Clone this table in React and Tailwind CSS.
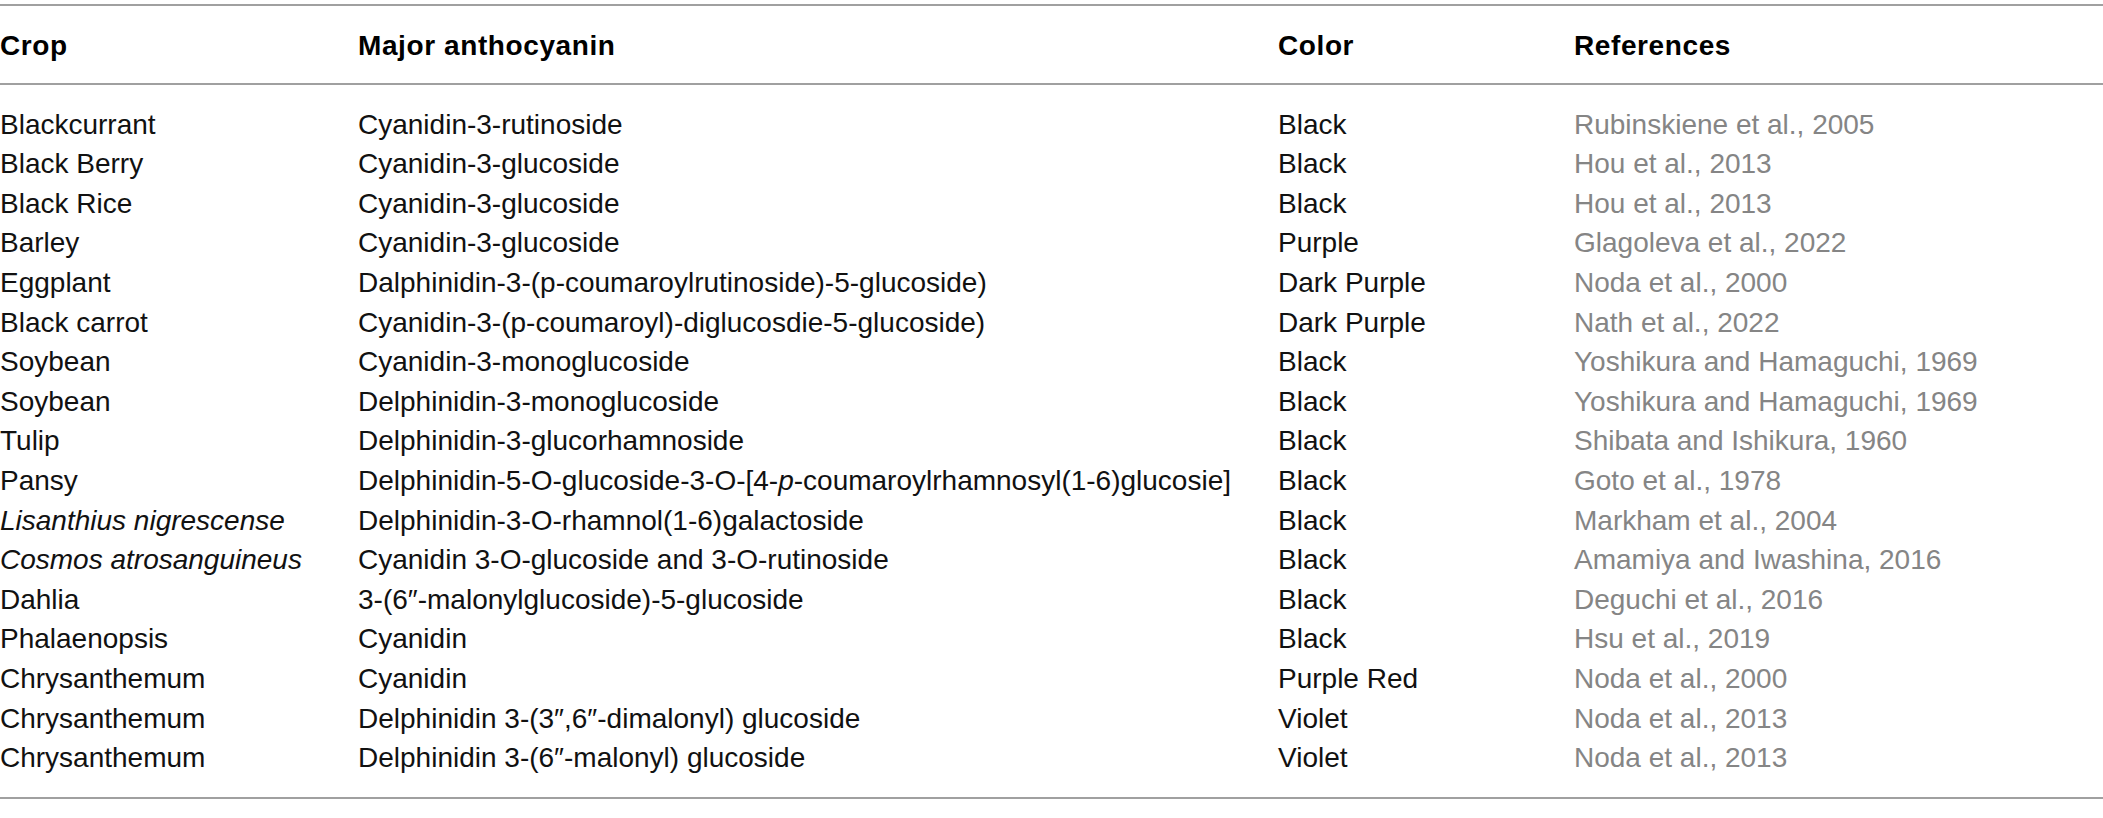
const rows = [
  { crop: "Blackcurrant", major: "Cyanidin-3-rutinoside", color: "Black", ref: "Rubinskiene et al., 2005" },
  { crop: "Black Berry", major: "Cyanidin-3-glucoside", color: "Black", ref: "Hou et al., 2013" },
  { crop: "Black Rice", major: "Cyanidin-3-glucoside", color: "Black", ref: "Hou et al., 2013" },
  { crop: "Barley", major: "Cyanidin-3-glucoside", color: "Purple", ref: "Glagoleva et al., 2022" },
  { crop: "Eggplant", major: "Dalphinidin-3-(p-coumaroylrutinoside)-5-glucoside)", color: "Dark Purple", ref: "Noda et al., 2000" },
  { crop: "Black carrot", major: "Cyanidin-3-(p-coumaroyl)-diglucosdie-5-glucoside)", color: "Dark Purple", ref: "Nath et al., 2022" },
  { crop: "Soybean", major: "Cyanidin-3-monoglucoside", color: "Black", ref: "Yoshikura and Hamaguchi, 1969" },
  { crop: "Soybean", major: "Delphinidin-3-monoglucoside", color: "Black", ref: "Yoshikura and Hamaguchi, 1969" },
  { crop: "Tulip", major: "Delphinidin-3-glucorhamnoside", color: "Black", ref: "Shibata and Ishikura, 1960" },
  {
    crop: "Pansy",
    major: (
      <>
        Delphinidin-5-O-glucoside-3-O-[4-<i>p</i>-coumaroylrhamnosyl(1-6)glucosie]
      </>
    ),
    color: "Black",
    ref: "Goto et al., 1978",
  },
  { crop: <i>Lisanthius nigrescense</i>, major: "Delphinidin-3-O-rhamnol(1-6)galactoside", color: "Black", ref: "Markham et al., 2004" },
  { crop: <i>Cosmos atrosanguineus</i>, major: "Cyanidin 3-O-glucoside and 3-O-rutinoside", color: "Black", ref: "Amamiya and Iwashina, 2016" },
  { crop: "Dahlia", major: "3-(6″-malonylglucoside)-5-glucoside", color: "Black", ref: "Deguchi et al., 2016" },
  { crop: "Phalaenopsis", major: "Cyanidin", color: "Black", ref: "Hsu et al., 2019" },
  { crop: "Chrysanthemum", major: "Cyanidin", color: "Purple Red", ref: "Noda et al., 2000" },
  { crop: "Chrysanthemum", major: "Delphinidin 3-(3″,6″-dimalonyl) glucoside", color: "Violet", ref: "Noda et al., 2013" },
  { crop: "Chrysanthemum", major: "Delphinidin 3-(6″-malonyl) glucoside", color: "Violet", ref: "Noda et al., 2013" },
];

/* =====================
   TABLE
===================== */
export default function App() {
  const cols = "grid grid-cols-[358px_920px_296px_1fr]";

  return (
    <div className="w-[2103px] h-[818px] bg-white pt-[4px] font-['Liberation_Sans',Arial,sans-serif] text-[28px] leading-[39.6px] text-[#111]">
      <div className="border-t-2 border-[#a0a0a0]" />

      {/* header */}
      <div className={`${cols} pt-[19.5px] pb-[18px] border-b-2 border-[#a0a0a0] font-bold tracking-[0.6px] text-black`}>
        <div>Crop</div>
        <div>Major anthocyanin</div>
        <div>Color</div>
        <div>References</div>
      </div>

      {/* body */}
      <div className="pt-[19.5px] pb-[19px] border-b-2 border-[#a0a0a0]">
        {rows.map((r, i) => (
          <div key={i} className={`${cols} whitespace-nowrap`}>
            <div>{r.crop}</div>
            <div>{r.major}</div>
            <div>{r.color}</div>
            <div className="text-[#858585]">{r.ref}</div>
          </div>
        ))}
      </div>
    </div>
  );
}
